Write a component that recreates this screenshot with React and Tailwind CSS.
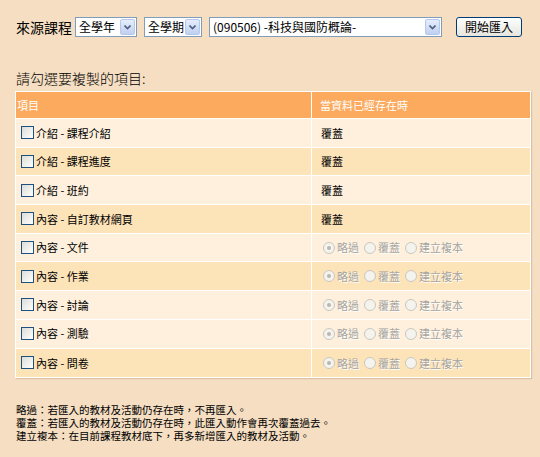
const rows = [
  { label: "介紹 - 課程介紹", mode: "text", dark: false },
  { label: "介紹 - 課程進度", mode: "text", dark: true },
  { label: "介紹 - 班約", mode: "text", dark: false },
  { label: "內容 - 自訂教材網頁", mode: "text", dark: true },
  { label: "內容 - 文件", mode: "radio", dark: false },
  { label: "內容 - 作業", mode: "radio", dark: true },
  { label: "內容 - 討論", mode: "radio", dark: false },
  { label: "內容 - 測驗", mode: "radio", dark: false },
  { label: "內容 - 問卷", mode: "radio", dark: true },
];

const Chevron = () => (
  <svg width="7" height="5" viewBox="0 0 7 5" fill="none">
    <path d="M0.5 0.5 L3.5 3.5 L6.5 0.5" stroke="#4D6185" strokeWidth="1.6" />
  </svg>
);

const FakeSelect = ({ value, width }) => (
  <div
    className={`flex h-[20px] items-stretch border border-[#7F9DB9] bg-white ${width}`}
  >
    <div className="flex-1 truncate pl-[3px] text-[12px] leading-[18px] text-black">
      {value}
    </div>
    <div className="m-[1px] flex w-[15px] items-center justify-center rounded-[2px] border border-[#B8C8EC] bg-gradient-to-b from-[#E6EEFC] to-[#C0D0F0]">
      <Chevron />
    </div>
  </div>
);

const Radio = ({ checked, children }) => (
  <label className="flex items-center gap-[2px] text-[11px] text-[#A7A49C] [text-shadow:1px_1px_0_#ffffff]">
    <span className="flex h-[12px] w-[12px] items-center justify-center rounded-full border border-[#CAC7BF] bg-[#F5F3EE]">
      {checked && <span className="h-[4px] w-[4px] rounded-full bg-[#BAB7AF]" />}
    </span>
    {children}
  </label>
);

export default function App() {
  return (
    <div className="min-h-[457px] w-[540px] bg-[#F5DEC2] pl-4 pt-[17px] font-['Noto_Sans_CJK_TC','Noto_Sans_CJK_SC',sans-serif] text-black">
      <div className="flex h-[20px] items-center">
        <span className="mr-[3px] text-[14px] leading-[20px]">來源課程</span>
        <FakeSelect value="全學年" width="w-[62px]" />
        <div className="w-[7px]" />
        <FakeSelect value="全學期" width="w-[58px]" />
        <div className="w-[7px]" />
        <FakeSelect value="(090506) -科技與國防概論-" width="w-[233px]" />
        <button className="ml-[14px] h-[20px] w-[66px] rounded-[3px] border border-[#003C74] bg-gradient-to-b from-white to-[#E6E5DE] text-[12px] leading-[18px] text-black">
          開始匯入
        </button>
      </div>

      <div className="mt-[33px] text-[14px] leading-[17px] font-light">請勾選要複製的項目:</div>

      <div className="mt-[4px] -ml-px w-[516px] border border-white shadow-[1px_1px_1px_rgba(180,150,110,0.4)]">
        <div className="flex h-[27px] border-b border-white bg-[#FCAA5E] text-[11px] text-white">
          <div className="flex w-[296px] items-center border-r border-white pl-[1px]">項目</div>
          <div className="flex flex-1 items-center pl-[8px]">當資料已經存在時</div>
        </div>
        {rows.map((r, i) => (
          <div
            key={i}
            className={`flex h-[28.7px] border-white text-[11px] ${i < rows.length - 1 ? "border-b" : ""} ${r.dark ? "bg-[#FDE3B8]" : "bg-[#FEF0DC]"}`}
          >
            <div className="flex w-[296px] items-center gap-[2px] border-r border-white pl-[5px]">
              <span className="h-[13px] w-[13px] border border-[#1C5180] bg-gradient-to-br from-[#DCDCD7] to-white" />
              <span>{r.label}</span>
            </div>
            <div className="flex flex-1 items-center gap-[5px] pl-[11px]">
              {r.mode === "text" ? (
                <span className="-ml-[2px]">覆蓋</span>
              ) : (
                <>
                  <Radio checked>略過</Radio>
                  <Radio>覆蓋</Radio>
                  <Radio>建立複本</Radio>
                </>
              )}
            </div>
          </div>
        ))}
      </div>

      <div className="mt-[25px] flex flex-col text-[10.5px] leading-[13px]">
        <span>略過：若匯入的教材及活動仍存在時，不再匯入。</span>
        <span>覆蓋：若匯入的教材及活動仍存在時，此匯入動作會再次覆蓋過去。</span>
        <span>建立複本：在目前課程教材底下，再多新增匯入的教材及活動。</span>
      </div>
    </div>
  );
}
